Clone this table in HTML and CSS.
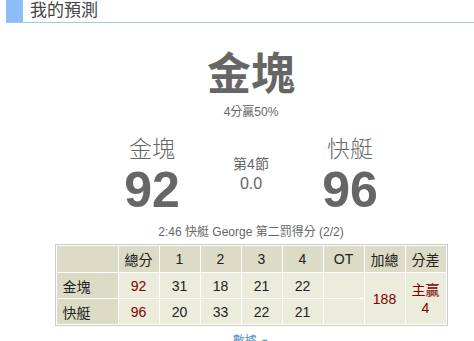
FILE: index.html
```html
<!DOCTYPE html>
<html lang="zh-Hant">
<head>
<meta charset="utf-8">
<link rel="stylesheet" href="styles.css">
</head>
<body>
<div class="header">
  <div class="header-mark"></div>
  <div class="header-title">我的預測</div>
</div>
<div class="content">
  <div class="winner">金塊</div>
  <div class="winner-sub">4分贏50%</div>
  <div class="scoreboard">
    <div class="team">
      <div class="team-name">金塊</div>
      <div class="team-score">92</div>
    </div>
    <div class="period">
      <div class="period-name">第4節</div>
      <div class="period-time">0.0</div>
    </div>
    <div class="team">
      <div class="team-name">快艇</div>
      <div class="team-score">96</div>
    </div>
  </div>
  <div class="status">2:46 快艇 George 第二罰得分 (2/2)</div>
  <table class="box">
    <tr class="head">
      <th class="first"></th>
      <th>總分</th><th>1</th><th>2</th><th>3</th><th>4</th><th>OT</th><th>加總</th><th>分差</th>
    </tr>
    <tr>
      <td class="first">金塊</td>
      <td class="total">92</td><td>31</td><td>18</td><td>21</td><td>22</td><td></td>
      <td class="total" rowspan="2">188</td>
      <td class="total diff" rowspan="2">主贏<br>4</td>
    </tr>
    <tr>
      <td class="first">快艇</td>
      <td class="total">96</td><td>20</td><td>33</td><td>22</td><td>21</td><td></td>
    </tr>
  </table>
  <div class="more">數據 <span class="arrow">▼</span></div>
</div>
</body>
</html>
```

FILE: styles.css
```css
html, body {
  margin: 0;
  padding: 0;
  background: #fff;
  font-family: "Liberation Sans", "Noto Sans CJK TC", sans-serif;
  color: #666;
  overflow: hidden;
}
.header {
  display: flex;
  height: 22px;
  border-bottom: 1px solid #9cc8f4;
  margin-left: 6px;
}
.header-mark {
  width: 17px;
  background: #8ebcf7;
}
.header-title {
  padding-left: 7px;
  font-size: 17px;
  line-height: 22px;
  color: #444;
}
.content {
  padding-left: 28px;
  display: flex;
  flex-direction: column;
  align-items: center;
}
.winner {
  margin-top: 26px;
  font-size: 44px;
  line-height: 52px;
  font-weight: bold;
  color: #666;
}
.winner-sub {
  font-size: 12px;
  line-height: 16px;
  margin-top: 3px;
  color: #666;
}
.scoreboard {
  display: flex;
  margin-top: 14px;
}
.team {
  width: 99px;
  display: flex;
  flex-direction: column;
  align-items: center;
}
.team-name {
  font-size: 23px;
  line-height: 30px;
  font-weight: 300;
  color: #666;
}
.team-score {
  font-size: 50px;
  line-height: 52px;
  font-weight: bold;
  color: #666;
}
.period {
  width: 99px;
  display: flex;
  flex-direction: column;
  align-items: center;
  padding-top: 21px;
}
.period-name {
  font-size: 14px;
  line-height: 18px;
}
.period-time {
  font-size: 16px;
  line-height: 22px;
}
.status {
  margin-top: 8px;
  font-size: 12px;
  line-height: 16px;
  color: #666;
}
.box {
  margin-top: 4px;
  border: 1px solid #ccc;
  border-spacing: 1px;
  background: #fff;
  font-size: 14px;
  color: #222;
}
.box th, .box td {
  width: 40px;
  text-align: center;
  font-weight: normal;
  padding: 0;
}
.box th {
  height: 26px;
  background: #dcdcc6;
}
.box td {
  height: 25px;
  background: #ececdc;
}
.box .first {
  width: 61px;
  background: #dcdcc6;
  text-align: left;
  padding-left: 6px;
  box-sizing: border-box;
}
.box td.total {
  color: #800000;
}
.box td.diff {
  line-height: 18px;
}
.more {
  margin-top: 5px;
  font-size: 12px;
  color: #5b8ec0;
}
.arrow {
  font-size: 9px;
}
```
